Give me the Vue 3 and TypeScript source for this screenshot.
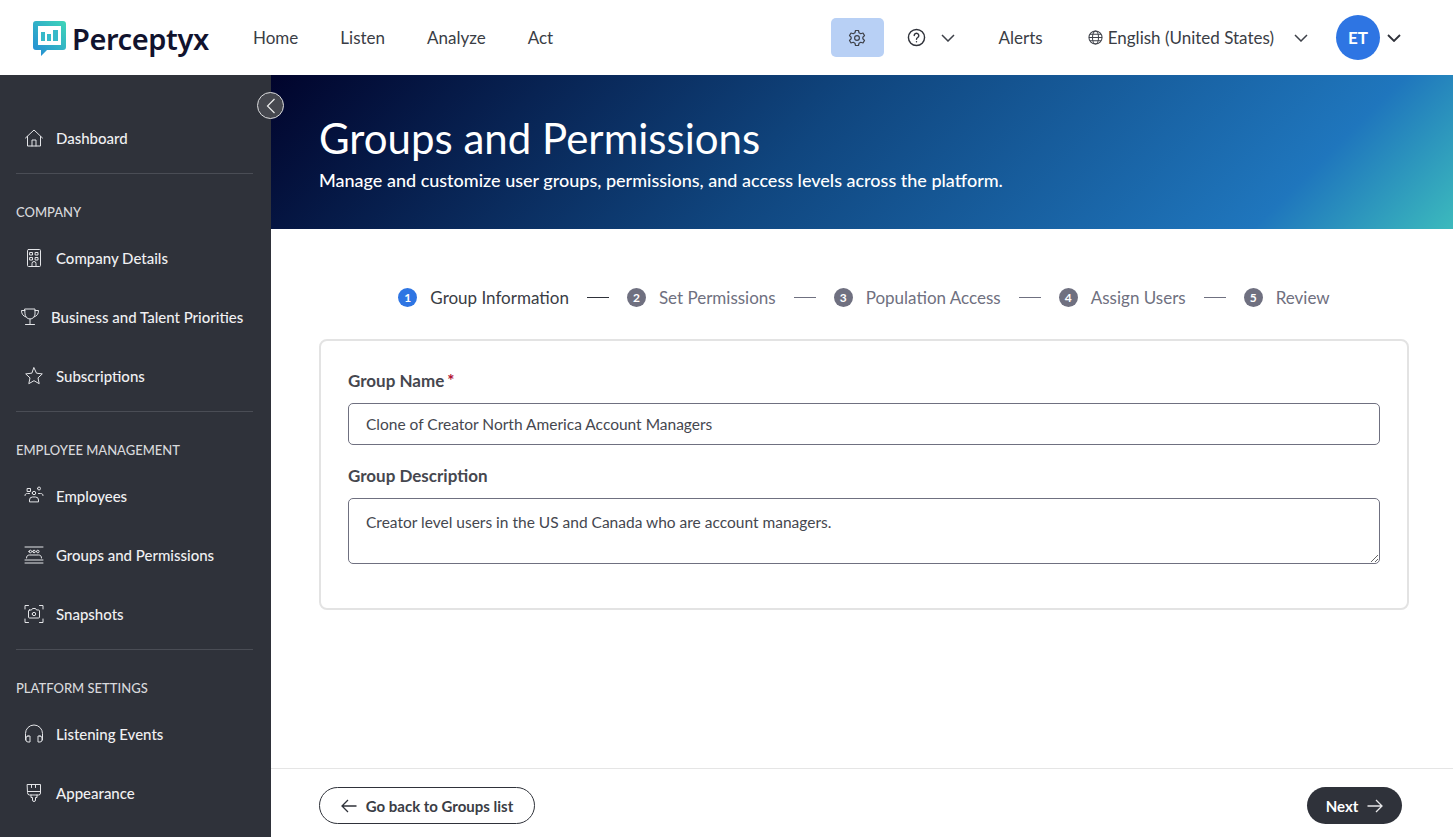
<template>
  <div class="page">
    <header class="topbar">
      <div class="logo">
        <svg class="logo-mark" width="34" height="36" viewBox="0 0 34 36" fill="none">
          <defs>
            <linearGradient id="logoGrad" x1="1" y1="0" x2="0" y2="1">
              <stop offset="0" stop-color="#3fd6b8" />
              <stop offset="1" stop-color="#2389d6" />
            </linearGradient>
          </defs>
          <path
            fill-rule="evenodd"
            fill="url(#logoGrad)"
            d="M3 0H30a3 3 0 0 1 3 3V26a3 3 0 0 1-3 3H14L8 35V29H3a3 3 0 0 1-3-3V3a3 3 0 0 1 3-3ZM5 5V24H28V5Z"
          />
          <path fill="#36b9c9" d="M8 11h4v9H8ZM14 13h4v7h-4ZM20 9h5v11h-5Z" />
        </svg>
        <span class="logo-text">Perceptyx</span>
      </div>

      <nav class="top-nav">
        <a v-for="link in topLinks" :key="link">{{ link }}</a>
      </nav>

      <div class="top-right">
        <button type="button" class="settings-btn" aria-label="Settings">
          <svg width="18" height="18" viewBox="0 0 24 24" fill="none" stroke="#3e4149" stroke-width="1.6" stroke-linejoin="round">
            <path d="M10 2h4l.7 3 2.3 1.3 3-.9 2 3.4-2.2 2.2v2l2.2 2.2-2 3.4-3-.9L14.700 19l-.7 3h-4l-.7-3L7 17.700l-3 .9-2-3.400L4.200 13v-2L2 8.800l2-3.400 3 .9L9.300 5Z" />
            <circle cx="12" cy="12" r="3.200" />
          </svg>
        </button>
        <div class="help">
          <svg width="19" height="19" viewBox="0 0 20 20" fill="none" stroke="#2f323a" stroke-width="1.500" stroke-linecap="round">
            <circle cx="10" cy="10" r="8.500" />
            <path d="M7.600 8a2.400 2.400 0 1 1 3.700 2c-.9.600-1.300 1-1.300 1.800" />
            <path d="M10 14.500v.1" />
          </svg>
          <svg class="chev" width="14" height="8" viewBox="0 0 14 8" fill="none"><path d="M1 1l6 6 6-6" /></svg>
        </div>
        <a class="alerts">Alerts</a>
        <div class="lang">
          <svg width="15" height="15" viewBox="0 0 16 16" fill="none" stroke="#3e4149" stroke-width="1.100">
            <circle cx="8" cy="8" r="7" />
            <ellipse cx="8" cy="8" rx="3.200" ry="7" />
            <path d="M1 8h14M2 4.500h12M2 11.500h12" />
          </svg>
          <span>English (United States)</span>
          <svg class="chev" width="14" height="8" viewBox="0 0 14 8" fill="none"><path d="M1 1l6 6 6-6" /></svg>
        </div>
        <div class="user">
          <span class="avatar">ET</span>
          <svg class="chev dark" width="14" height="8" viewBox="0 0 14 8" fill="none"><path d="M1 1l6 6 6-6" /></svg>
        </div>
      </div>
    </header>

    <div class="body-row">
      <aside class="sidebar">
        <template v-for="(group, i) in navGroups" :key="i">
          <hr v-if="i > 0" class="nav-rule" />
          <div v-if="group.title" class="nav-title">{{ group.title }}</div>
          <a v-for="item in group.items" :key="item.label" class="nav-item" :class="{ tight: item.tight }">
            <svg width="20" height="20" viewBox="0 0 20 20" fill="none" stroke="#e4e5e8" stroke-width="1" stroke-linecap="round" stroke-linejoin="round">
              <path v-for="d in item.icon" :key="d" :d="d" />
            </svg>
            <span>{{ item.label }}</span>
          </a>
        </template>
      </aside>

      <button type="button" class="collapse-btn" aria-label="Collapse sidebar">
        <svg width="10" height="16" viewBox="0 0 10 16" fill="none" stroke="#eceded" stroke-width="1.200"><path d="M8.500 1L1.500 8l7 7" /></svg>
      </button>

      <main class="main">
        <section class="hero">
          <h1>Groups and Permissions</h1>
          <p>Manage and customize user groups, permissions, and access levels across the platform.</p>
        </section>

        <section class="content">
          <ol class="steps">
            <template v-for="(step, i) in steps" :key="step">
              <li v-if="i > 0" class="step-line" :class="{ first: i === 1 }"></li>
              <li class="step" :class="{ active: i === 0 }">
                <span class="step-num">{{ i + 1 }}</span>
                <span>{{ step }}</span>
              </li>
            </template>
          </ol>

          <form class="card" @submit.prevent>
            <label class="field-label" for="group-name">Group Name<span class="req">*</span></label>
            <input id="group-name" class="field" type="text" v-model="groupName" />
            <label class="field-label second" for="group-desc">Group Description</label>
            <textarea id="group-desc" class="field area" v-model="groupDesc"></textarea>
          </form>
        </section>

        <footer class="actions">
          <button type="button" class="btn-back">
            <svg width="16" height="14" viewBox="0 0 16 14" fill="none" stroke="#2f323a" stroke-width="1.300"><path d="M15.500 7H1M7 1L1 7l6 6" /></svg>
            Go back to Groups list
          </button>
          <button type="button" class="btn-next">
            Next
            <svg width="16" height="14" viewBox="0 0 16 14" fill="none" stroke="#e8e8ea" stroke-width="1.300"><path d="M.5 7H15M9 1l6 6-6 6" /></svg>
          </button>
        </footer>
      </main>
    </div>
  </div>
</template>

<script setup lang="ts">
import { ref } from 'vue'

interface NavItem {
  label: string
  icon: string[]
  tight?: boolean
}

interface NavGroup {
  title?: string
  items: NavItem[]
}

const topLinks = ['Home', 'Listen', 'Analyze', 'Act']
const steps = ['Group Information', 'Set Permissions', 'Population Access', 'Assign Users', 'Review']

const groupName = ref('Clone of Creator North America Account Managers')
const groupDesc = ref('Creator level users in the US and Canada who are account managers.')

const navGroups: NavGroup[] = [
  {
    items: [
      {
        label: 'Dashboard',
        icon: ['M1.500 10L10 2l8.500 8', 'M3.500 8.500V18h13V8.500', 'M8 18v-6h4v6']
      }
    ]
  },
  {
    title: 'COMPANY',
    items: [
      {
        label: 'Company Details',
        icon: [
          'M4.500 1.500h11a1 1 0 0 1 1 1v15a1 1 0 0 1-1 1h-11a1 1 0 0 1-1-1v-15a1 1 0 0 1 1-1Z',
          'M6 4.500h2.500V7H6ZM11.500 4.500H14V7h-2.500ZM6 9.500h2.500V12H6ZM11.500 9.500H14V12h-2.500Z',
          'M8 18.500v-3a2 2 0 0 1 4 0v3'
        ]
      },
      {
        label: 'Business and Talent Priorities',
        tight: true,
        icon: [
          'M5 2h10v5a5 5 0 0 1-10 0Z',
          'M5 3.500H1.500c0 3.500 1.500 5.500 4.500 6.500',
          'M15 3.500h3.500c0 3.500-1.500 5.500-4.500 6.500',
          'M10 12v5',
          'M5.500 17.500h9'
        ]
      },
      {
        label: 'Subscriptions',
        icon: ['M10 1.800l2.500 5.400 5.800.7-4.300 4 1.200 5.800-5.200-3-5.200 3L6 11.900l-4.300-4 5.800-.7Z']
      }
    ]
  },
  {
    title: 'EMPLOYEE MANAGEMENT',
    items: [
      {
        label: 'Employees',
        icon: [
          'M3.500 2.500h3v3h-3ZM13.500 2.500a1.500 1.500 0 1 0 3 0 1.500 1.500 0 1 0-3 0Z',
          'M8.300 7a1.700 1.700 0 1 0 3.400 0 1.700 1.700 0 1 0-3.400 0Z',
          'M5.500 15.500v-1.500a3 3 0 0 1 3-3h3a3 3 0 0 1 3 3v1.500Z',
          'M1 9.500c0-1.500 1-2 2.500-2h2',
          'M19 9.500c0-1.500-1-2-2.500-2h-2'
        ]
      },
      {
        label: 'Groups and Permissions',
        icon: [
          'M1 2h18M1 18h18',
          'M5 6.500a1.300 1.300 0 1 0 2.600 0 1.300 1.300 0 1 0-2.600 0ZM8.700 6.500a1.300 1.300 0 1 0 2.600 0 1.300 1.300 0 1 0-2.600 0ZM12.500 6.500a1.300 1.300 0 1 0 2.600 0 1.300 1.300 0 1 0-2.600 0Z',
          'M2.500 13c0-2 1-3 3-3h9c2 0 3 1 3 3',
          'M1 15h18'
        ]
      },
      {
        label: 'Snapshots',
        icon: [
          'M1 5V1.500h3.500M15.500 1.500H19V5M1 15v3.500h3.500M15.500 18.500H19V15',
          'M5.500 6h2l1-1.500h3L12.500 6h2a1 1 0 0 1 1 1v6a1 1 0 0 1-1 1h-9a1 1 0 0 1-1-1V7a1 1 0 0 1 1-1Z',
          'M8.300 10a1.700 1.700 0 1 0 3.400 0 1.700 1.700 0 1 0-3.400 0Z'
        ]
      }
    ]
  },
  {
    title: 'PLATFORM SETTINGS',
    items: [
      {
        label: 'Listening Events',
        icon: [
          'M1.500 16v-6.500a8.500 8.500 0 0 1 17 0V16',
          'M4 12h2v6H4a2 2 0 0 1-2-2v-2a2 2 0 0 1 2-2ZM16 12h-2v6h2a2 2 0 0 0 2-2v-2a2 2 0 0 0-2-2Z'
        ]
      },
      {
        label: 'Appearance',
        icon: [
          'M3.500 1.500h13V10a2 2 0 0 1-2 2h-9a2 2 0 0 1-2-2Z',
          'M3.500 8.500h13',
          'M7.500 1.500v3M11.500 1.500v3',
          'M7 12v2.500h1.500v2.500a1.500 1.500 0 0 0 3 0v-2.500H13V12'
        ]
      }
    ]
  }
]
</script>

<style>
html,
body {
  margin: 0;
  height: 100%;
  overflow: hidden;
  background: #fff;
}
</style>

<style scoped>
.page {
  height: 100vh;
  display: flex;
  flex-direction: column;
  font-family: 'Lato', 'Liberation Sans', sans-serif;
  color: #3a3d45;
}

.topbar {
  height: 75px;
  flex-shrink: 0;
  display: flex;
  align-items: center;
  padding-left: 33px;
  background: #fff;
}

.logo {
  display: flex;
  align-items: center;
  gap: 5px;
  width: 220px;
  margin-top: 2px;
}

.logo-text {
  font-family: 'Noto Sans', sans-serif;
  font-size: 29px;
  font-weight: 600;
  color: #11132e;
  letter-spacing: -0.4px;
}

.top-nav {
  display: flex;
  gap: 42px;
  font-size: 17px;
}

.top-right {
  margin-left: auto;
  display: flex;
  align-items: center;
  padding-right: 52px;
  font-size: 17px;
}

.settings-btn {
  width: 53px;
  height: 39px;
  border: none;
  border-radius: 5px;
  background: #b8d0f5;
  display: flex;
  align-items: center;
  justify-content: center;
  padding: 0;
}

.help {
  display: flex;
  align-items: center;
  gap: 15px;
  margin-left: 23px;
}

.chev {
  stroke: #3e4149;
  stroke-width: 1.500;
}

.chev.dark {
  stroke: #2f323a;
  stroke-width: 1.800;
}

.alerts {
  margin-left: 44px;
}

.lang {
  display: flex;
  align-items: center;
  gap: 5px;
  margin-left: 45px;
}

.lang .chev {
  margin-left: 15px;
}

.user {
  display: flex;
  align-items: center;
  gap: 7px;
  margin-left: 28px;
}

.avatar {
  width: 44px;
  height: 45px;
  border-radius: 50%;
  background: #2e75e3;
  color: #fff;
  font-weight: 700;
  font-size: 17px;
  display: flex;
  align-items: center;
  justify-content: center;
}

.body-row {
  flex: 1;
  min-height: 0;
  display: flex;
  position: relative;
}

.sidebar {
  width: 271px;
  flex-shrink: 0;
  box-sizing: border-box;
  padding: 33px 18px 0 16px;
  background: #2f323a;
  overflow: hidden;
}

.nav-item {
  height: 59px;
  display: flex;
  align-items: center;
  gap: 12px;
  padding-left: 8px;
  color: #f0f0f2;
  font-size: 15px;
  font-weight: 500;
  white-space: nowrap;
}

.nav-item.tight {
  padding-left: 4px;
  gap: 11px;
}

.nav-rule {
  height: 1px;
  margin: 6px 0 30px;
  border: none;
  background: #4a4d55;
}

.nav-title {
  height: 16px;
  line-height: 16px;
  margin-bottom: 8px;
  color: #d8d9dc;
  font-size: 13px;
  font-weight: 500;
  white-space: nowrap;
}

.collapse-btn {
  position: absolute;
  left: 257px;
  top: 17px;
  width: 27px;
  height: 27px;
  padding: 0;
  border: 1px solid #dcdddf;
  border-radius: 50%;
  background: #46484f;
  display: flex;
  align-items: center;
  justify-content: center;
}

.main {
  flex: 1;
  min-width: 0;
  display: flex;
  flex-direction: column;
}

.hero {
  height: 154px;
  flex-shrink: 0;
  box-sizing: border-box;
  padding: 38px 48px 0;
  color: #fff;
  background: linear-gradient(135deg, #01042c 0%, #10467f 45%, #1f76bd 85%, #3cbabd 100%);
}

.hero h1 {
  margin: 0;
  font-size: 42px;
  line-height: 50px;
  font-weight: 400;
}

.hero p {
  margin: 5px 0 0;
  font-size: 18px;
  line-height: 24px;
  font-weight: 500;
}

.content {
  flex: 1;
  min-height: 0;
  padding: 0 44px 0 48px;
}

.steps {
  list-style: none;
  margin: 0;
  padding: 56px 0 0;
  height: 24px;
  display: flex;
  align-items: center;
  justify-content: center;
  font-size: 17px;
  color: #6f7080;
}

.step {
  display: flex;
  align-items: center;
  gap: 13px;
}

.step.active {
  color: #3a3d45;
}

.step-num {
  width: 19px;
  height: 19px;
  border-radius: 50%;
  background: #6f7080;
  color: #fff;
  font-size: 12px;
  font-weight: 700;
  display: flex;
  align-items: center;
  justify-content: center;
}

.step.active .step-num {
  background: #2e75e3;
}

.step-line {
  width: 22px;
  height: 1px;
  margin: 0 18px;
  background: #6f7080;
}

.step-line.first {
  background: #2f323a;
}

.card {
  margin-top: 30px;
  height: 271px;
  box-sizing: border-box;
  padding: 29px 27px 0;
  border: 2px solid #e3e3e3;
  border-radius: 8px;
  display: flex;
  flex-direction: column;
}

.field-label {
  font-size: 17px;
  line-height: 22px;
  font-weight: 700;
  color: #45474f;
}

.field-label.second {
  margin-top: 20px;
}

.req {
  margin-left: 3px;
  color: #b01030;
}

.field {
  display: block;
  width: 100%;
  box-sizing: border-box;
  margin-top: 11px;
  height: 42px;
  padding: 0 17px;
  border: 1px solid #6f7080;
  border-radius: 5px;
  background: #fff;
  color: #45474f;
  font-family: inherit;
  font-size: 15.500px;
  outline: none;
}

.field.area {
  height: 66px;
  padding: 14px 17px 0;
  line-height: 18px;
  resize: vertical;
}

.actions {
  height: 69px;
  flex-shrink: 0;
  box-sizing: border-box;
  padding: 18px 51px 0 48px;
  border-top: 1px solid #e5e5e5;
  display: flex;
  justify-content: space-between;
  align-items: flex-start;
}

.btn-back,
.btn-next {
  height: 37px;
  box-sizing: border-box;
  border-radius: 19px;
  font-family: inherit;
  font-size: 15px;
  font-weight: 700;
  display: flex;
  align-items: center;
  gap: 9px;
}

.btn-back {
  width: 216px;
  justify-content: center;
  padding: 0;
  border: 1px solid #2f323a;
  background: #fff;
  color: #3a3d45;
}

.btn-next {
  width: 95px;
  justify-content: center;
  padding: 0;
  border: none;
  background: #2f323a;
  color: #fff;
}
</style>
